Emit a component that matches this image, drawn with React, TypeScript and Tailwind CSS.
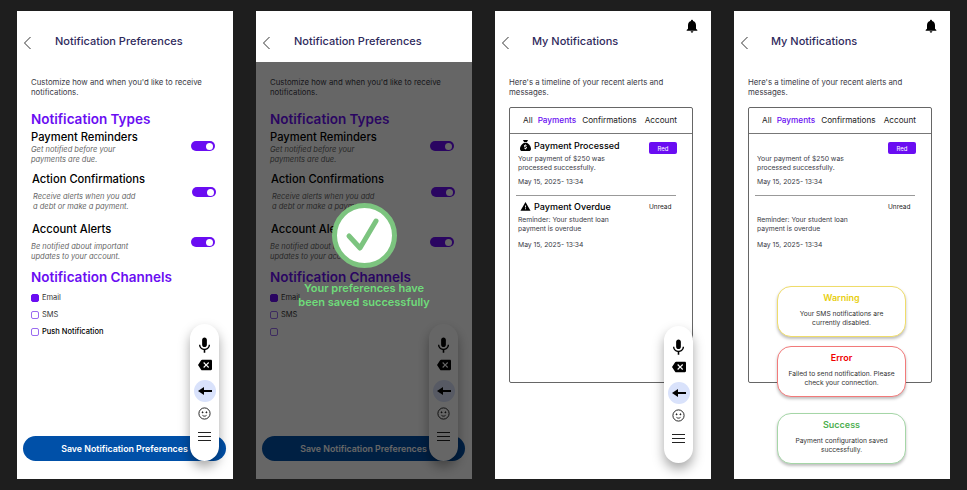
import type { ReactNode } from "react";
import { MdBackspace, MdMic, MdNotifications, MdWarning } from "react-icons/md";
import { FaSackDollar } from "react-icons/fa6";

function BackIcon() {
  return (
    <svg width="9" height="14" viewBox="0 0 9 14" fill="none" stroke="#333" strokeWidth="1">
      <path d="M7.5 1 1.5 7l6 6" />
    </svg>
  );
}

function Header({ title, bell }: { title: string; bell?: boolean }) {
  return (
    <div className="relative h-[51px] bg-white">
      {bell && (
        <MdNotifications className="absolute top-[7px] right-[11px] text-black" size={16} />
      )}
      <div className="flex items-start pt-[25px] pl-[6px]">
        <BackIcon />
        <h1
          className={`-mt-[5px] text-[11px] leading-[20px] font-medium text-[#2f2a5c] ${bell ? "ml-[22px]" : "ml-[23px]"}`}
        >
          {title}
        </h1>
      </div>
    </div>
  );
}

function Toggle() {
  return (
    <div className="flex h-[10px] w-[24px] items-center justify-end rounded-full bg-[#6a0df2] pr-[2px]">
      <div className="h-[7px] w-[7px] rounded-full bg-white" />
    </div>
  );
}

function TypeRow({
  title,
  lines,
  className,
  descClass,
}: {
  title: string;
  lines: string[];
  className: string;
  descClass: string;
}) {
  return (
    <div className={`relative ${className}`}>
      <h3 className="text-[11.2px] leading-[14px] font-medium text-black">{title}</h3>
      <p className={`text-[7.5px] leading-[9.5px] text-[#666] italic ${descClass}`}>
        {lines[0]}
        <br />
        {lines[1]}
      </p>
    </div>
  );
}

function Check({ on, label, strong }: { on?: boolean; label: string; strong?: boolean }) {
  return (
    <div className="flex h-[9px] items-center gap-[3px]">
      <span
        className={`h-[8px] w-[8px] rounded-[2px] border ${on ? "border-[#6a0df2] bg-[#6a0df2]" : "border-[#9a6bf0] bg-white"}`}
      />
      <span className={`text-[7.5px] ${strong ? "font-medium text-black" : "text-[#333]"}`}>
        {label}
      </span>
    </div>
  );
}

function FloatingBar({ className }: { className: string }) {
  return (
    <div
      className={`absolute flex h-[137px] w-[29px] flex-col items-center rounded-full bg-white pt-[12px] shadow-[0_6px_12px_rgba(0,0,0,0.35)] ${className}`}
    >
      <MdMic size={19} className="text-black" />
      <MdBackspace size={14} className="mt-[3px] text-black" />
      <div className="mt-[8px] flex h-[22px] w-[22px] items-center justify-center rounded-full bg-[#d9e2fb]">
        <svg width="14" height="10" viewBox="0 0 14 10" fill="#000">
          <path d="M0 5 6 1v3h8v2H6v3z" />
        </svg>
      </div>
      <svg className="mt-[5px]" width="13" height="13" viewBox="0 0 13 13" fill="none" stroke="#111" strokeWidth="0.9">
        <circle cx="6.5" cy="6.5" r="5.6" />
        <circle cx="4.6" cy="5.3" r="0.5" fill="#111" />
        <circle cx="8.4" cy="5.3" r="0.5" fill="#111" />
        <path d="M4.5 8.4c1.2 1 2.8 1 4 0" />
      </svg>
      <div className="mt-[12px] flex w-[13px] flex-col gap-[3px]">
        <span className="h-px bg-[#222]" />
        <span className="h-px bg-[#222]" />
        <span className="h-px bg-[#222]" />
      </div>
    </div>
  );
}

function PreferencesBody({ hidePush }: { hidePush?: boolean }) {
  return (
    <div className="pl-[14px]">
      <p className="mt-[16px] text-[7.8px] leading-[9.5px] text-[#3a3a46]">
        Customize how and when you'd like to receive
        <br />
        notifications.
      </p>
      <h2 className="mt-[13px] text-[13.5px] leading-[18px] font-semibold text-[#6a0df2]">
        Notification Types
      </h2>
      <TypeRow
        className="mt-[2px]"
        descClass="mt-[1px]"
        title="Payment Reminders"
        lines={["Get notified before your", "payments are due."]}
      />
      <TypeRow
        className="mt-[8px] ml-[1px]"
        descClass="mt-[6px] ml-[1px]"
        title="Action Confirmations"
        lines={["Receive alerts when you add", "a debt or make a payment."]}
      />
      <TypeRow
        className="mt-[11px] ml-[1px]"
        descClass="mt-[6px] -ml-[1px]"
        title="Account Alerts"
        lines={["Be notified about important", "updates to your account."]}
      />
      <h2 className="mt-[7px] text-[13.5px] leading-[18px] font-semibold text-[#6a0df2]">
        Notification Channels
      </h2>
      <div className="mt-[7px] flex flex-col gap-[8px]">
        <Check on label="Email" />
        <Check label="SMS" />
        <Check label={hidePush ? "" : "Push Notification"} strong />
      </div>
    </div>
  );
}

function PreferencesExtras() {
  return (
    <>
      <div className="absolute top-[130px] left-[174px]">
        <Toggle />
      </div>
      <div className="absolute top-[176px] left-[175px]">
        <Toggle />
      </div>
      <div className="absolute top-[226px] left-[174px]">
        <Toggle />
      </div>
      <button className="absolute top-[425px] left-[6px] h-[25px] w-[203px] rounded-full bg-[#0050a8] text-[8.8px] font-semibold text-white">
        Save Notification Preferences
      </button>
      <FloatingBar className="top-[313px] left-[173px]" />
    </>
  );
}

function Screen({ children }: { children: ReactNode }) {
  return <div className="relative h-[468px] w-[216px] overflow-hidden bg-white">{children}</div>;
}

function NotificationRow({
  icon,
  title,
  lines,
  badge,
  className,
  dateClass,
}: {
  icon?: ReactNode;
  title?: string;
  lines: string[];
  badge: ReactNode;
  className: string;
  dateClass: string;
}) {
  return (
    <div className={`relative pl-[8px] ${className}`}>
      <div className="absolute top-[3px] right-[15px]">{badge}</div>
      <div className="flex h-[13px] items-center gap-[3px] pl-[2px]">
        {icon}
        {title && <h3 className="text-[9px] font-medium text-black">{title}</h3>}
      </div>
      <p className="mt-[3px] text-[6.8px] leading-[8.5px] text-[#3a3a46]">
        {lines[0]}
        <br />
        {lines[1]}
      </p>
      <p className={`text-[6.8px] leading-[9px] text-[#3a3a46] ${dateClass}`}>May 15, 2025- 13:34</p>
    </div>
  );
}

function NotificationsScreen({ detail }: { detail?: boolean }) {
  return (
    <Screen>
      <Header title="My Notifications" bell />
      <div className="pl-[14px]">
        <p className="mt-[16px] text-[7.8px] leading-[9.5px] text-[#3a3a46]">
          Here's a timeline of your recent alerts and
          <br />
          messages.
        </p>
        <div className="mt-[10px] h-[276px] w-[184px] rounded-[2px] border border-[#666]">
          <div className="flex h-[26px] items-center border-b border-[#777] pl-[13px] text-[8.2px] text-[#222]">
            <span>All</span>
            <span className="ml-[5px] font-medium text-[#6a0df2]">Payments</span>
            <span className="ml-[6px]">Confirmations</span>
            <span className="ml-[8px]">Account</span>
          </div>
          <NotificationRow
            className="mt-[5px]"
            dateClass="mt-[5px]"
            icon={detail ? <FaSackDollar size={11} className="text-black" /> : undefined}
            title={detail ? "Payment Processed" : undefined}
            lines={["Your payment of $250 was", "processed successfully."]}
            badge={
              <span className="flex h-[12px] w-[28px] items-center justify-center rounded-[2px] bg-[#6a0df2] text-[6px] text-white">
                Red
              </span>
            }
          />
          <div className="mx-[6px] mt-[9px] h-px w-[160px] bg-[#999]" />
          <NotificationRow
            className="mt-[4px]"
            dateClass="mt-[7px]"
            icon={detail ? <MdWarning size={11} className="text-black" /> : undefined}
            title={detail ? "Payment Overdue" : undefined}
            lines={["Reminder: Your student loan", "payment is overdue"]}
            badge={<span className="block w-[28px] text-[6.5px] text-[#222]">Unread</span>}
          />
        </div>
      </div>
    </Screen>
  );
}

function Toast({
  title,
  text,
  border,
  color,
  className,
}: {
  title: string;
  text: string[];
  border: string;
  color: string;
  className?: string;
}) {
  return (
    <div
      className={`h-[51px] w-[129px] rounded-[14px] border bg-white pt-[5px] text-center shadow-[0_2px_3px_rgba(0,0,0,0.25)] ${border} ${className ?? ""}`}
    >
      <h4 className={`text-[9px] leading-[12px] font-semibold ${color}`}>{title}</h4>
      <p className="mt-[6px] text-[6.7px] leading-[8.5px] text-[#333]">
        {text[0]}
        <br />
        {text[1]}
      </p>
    </div>
  );
}

export default function App() {
  return (
    <div className="flex h-[490px] w-[967px] gap-[23px] overflow-hidden bg-[#1e1e1e] pt-[11px] pl-[17px] font-['Inter',sans-serif]">
      <Screen>
        <Header title="Notification Preferences" />
        <PreferencesBody />
        <PreferencesExtras />
      </Screen>

      <Screen>
        <Header title="Notification Preferences" />
        <PreferencesBody hidePush />
        <PreferencesExtras />
        <div className="absolute inset-x-0 top-[51px] bottom-0 bg-black/60" />
        <div className="absolute top-[192px] left-[41px] flex w-[134px] flex-col items-center">
          <div className="flex h-[65px] w-[65px] items-center justify-center rounded-full border-[5px] border-[#7cc47f] bg-white">
            <svg width="38" height="38" viewBox="0 0 38 38" fill="none" stroke="#7cc47f" strokeWidth="5" strokeLinecap="round" strokeLinejoin="round">
              <path d="M4 19l11 12L31 4" />
            </svg>
          </div>
          <p className="mt-[13px] text-center text-[11px] leading-[14px] font-semibold whitespace-nowrap text-[#6fdc7a]">
            Your preferences have
            <br />
            been saved successfully
          </p>
        </div>
      </Screen>

      <div className="relative">
        <NotificationsScreen detail />
        <FloatingBar className="top-[315px] left-[169px]" />
      </div>

      <div className="relative">
        <NotificationsScreen />
        <div className="absolute top-[275px] left-[43px] flex flex-col">
          <Toast
            title="Warning"
            text={["Your SMS notifications are", "currently disabled."]}
            border="border-[#efdc6a]"
            color="text-[#e8cf10]"
          />
          <Toast
            className="mt-[9px]"
            title="Error"
            text={["Failed to send notification. Please", "check your connection."]}
            border="border-[#f27a7a]"
            color="text-[#f00000]"
          />
          <Toast
            className="mt-[16px]"
            title="Success"
            text={["Payment configuration saved", "successfully."]}
            border="border-[#a5d6a7]"
            color="text-[#4caf50]"
          />
        </div>
      </div>
    </div>
  );
}
